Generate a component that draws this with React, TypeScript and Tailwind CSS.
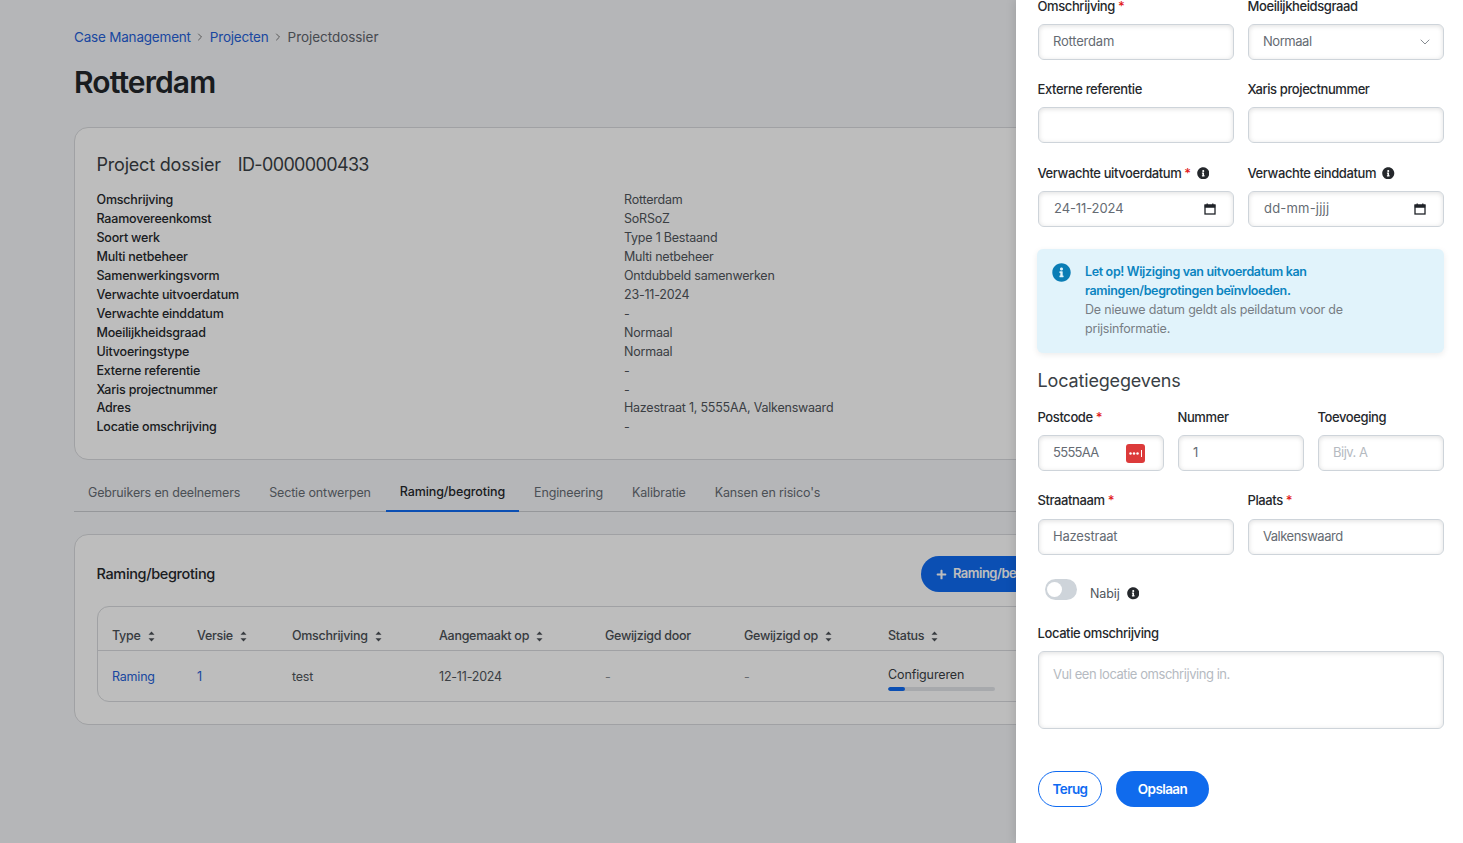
import React from "react";
import { FaInfoCircle, FaPlus } from "react-icons/fa";
import { ChevronDown, ChevronRight } from "lucide-react";

const details: [string, string][] = [
  ["Omschrijving", "Rotterdam"],
  ["Raamovereenkomst", "SoRSoZ"],
  ["Soort werk", "Type 1 Bestaand"],
  ["Multi netbeheer", "Multi netbeheer"],
  ["Samenwerkingsvorm", "Ontdubbeld samenwerken"],
  ["Verwachte uitvoerdatum", "23-11-2024"],
  ["Verwachte einddatum", "-"],
  ["Moeilijkheidsgraad", "Normaal"],
  ["Uitvoeringstype", "Normaal"],
  ["Externe referentie", "-"],
  ["Xaris projectnummer", "-"],
  ["Adres", "Hazestraat 1, 5555AA, Valkenswaard"],
  ["Locatie omschrijving", "-"],
];

const tabs = ["Gebruikers en deelnemers", "Sectie ontwerpen", "Raming/begroting", "Engineering", "Kalibratie", "Kansen en risico's"];

const Sort = () => (
  <svg width="7" height="11" viewBox="0 0 7 11" className="ml-[7px] shrink-0" fill="currentColor">
    <path d="M3.5 0.5 6.5 3.8H0.5Z" />
    <path d="M3.5 10.5 0.5 7.2H6.5Z" />
  </svg>
);

const CalendarGlyph = () => (
  <svg width="12" height="12" viewBox="0 0 12 12" className="shrink-0 text-[#1f2328]" fill="none" stroke="currentColor">
    <rect x="1" y="2" width="10" height="9" strokeWidth="1.3" />
    <rect x="1" y="2" width="10" height="2.4" fill="currentColor" strokeWidth="0.6" />
    <path d="M3.2 0.5v2M8.8 0.5v2" strokeWidth="1.3" />
  </svg>
);

const Field = ({ children, className = "h-9 items-center" }: { children?: React.ReactNode; className?: string }) => (
  <div className={`flex rounded-md border border-[#ced4da] bg-white px-[14px] text-[13px] tracking-[-0.2px] text-[#656b73] shadow-[inset_0_1px_5px_rgba(0,0,0,0.13)] ${className}`}>
    {children}
  </div>
);

const Label = ({ text, req, info }: { text: string; req?: boolean; info?: boolean }) => (
  <div className="-ml-[0.5px] flex h-[18px] items-center pb-[2px] text-[13px] leading-[12px] font-medium tracking-[-0.4px] text-[#25282c]">
    <span>{text}</span>
    {req && <span className="ml-[3px] text-[#e21a1a]">*</span>}
    {info && <FaInfoCircle className="ml-[6px] text-[12.5px] text-[#25282c]" />}
  </div>
);

export default function App() {
  return (
    <div className="relative h-[843px] w-full overflow-hidden bg-[#f5f6f9] font-['Inter','Liberation_Sans',sans-serif]">
      <main className="w-[1315px] pl-[74px] pt-[28px] text-[#3a3f45]">
        <nav className="flex h-[18px] items-center text-[13.5px] tracking-[-0.2px]">
          <span className="text-[#2561d8]">Case Management</span>
          <ChevronRight className="mx-[3.5px] h-3 w-3 text-[#777]" />
          <span className="text-[#2561d8]">Projecten</span>
          <ChevronRight className="mx-[3.5px] h-3 w-3 text-[#777]" />
          <span className="tracking-[-0.05px] text-[#5f656c]">Projectdossier</span>
        </nav>
        <h1 className="mt-[17px] h-[38px] text-[30px] leading-[38px] font-semibold tracking-[-0.9px] text-[#23262a]">Rotterdam</h1>

        <section className="mt-[26px] h-[333px] rounded-[14px] border border-[#d8dadd] bg-white px-[22px] pt-[24px]">
          <h2 className="-ml-[0.5px] flex h-[24px] items-center gap-[17px] text-[18px] tracking-[-0.2px] text-[#3a3f45]">
            <span>Project dossier</span>
            <span className="tracking-[-0.65px]">ID-0000000433</span>
          </h2>
          <dl className="mt-[15px] -ml-[0.5px] grid grid-cols-[527.5px_1fr] text-[12.5px] leading-[18.95px]">
            {details.map(([k, v]) => (
              <React.Fragment key={k}>
                <dt className="font-medium tracking-[-0.2px] text-[#25282c]">{k}</dt>
                <dd className="tracking-[-0.22px] text-[#50555b]">{v}</dd>
              </React.Fragment>
            ))}
          </dl>
        </section>

        <div className="mt-[14px] flex h-[38px] gap-px border-b border-[#c9ccd0] text-[12.5px]">
          {tabs.map((t) => (
            <div
              key={t}
              className={`flex h-[38px] items-center px-[14px] ${
                t === "Raming/begroting" ? "border-b-2 border-[#0f6bf2] font-medium tracking-[-0.1px] text-[#25282c]" : "tracking-[-0.15px] text-[#666c73]"
              }`}
            >
              {t}
            </div>
          ))}
        </div>

        <section className="mt-[22px] h-[191px] rounded-[14px] border border-[#d8dadd] bg-white px-[22px] pt-[21px]">
          <div className="flex h-9 items-center">
            <h3 className="-ml-[0.5px] text-[14.5px] font-medium tracking-[-0.35px] text-[#25282c]">Raming/begroting</h3>
            <button className="ml-[706px] flex h-9 w-[180px] items-center gap-[6px] rounded-full bg-[#0f6bf2] px-[15px] text-[13px] font-semibold tracking-[-0.5px] whitespace-nowrap text-white">
              <FaPlus className="text-[11px]" />
              Raming/begroting
            </button>
          </div>
          <div className="mt-[14px] h-[96px] rounded-[12px] border border-[#d8dadd] text-[12.5px]">
            <div className="grid h-[44px] grid-cols-[85px_95px_147px_166px_139px_144px_1fr] items-center border-b border-[#d8dadd] px-[14px] pt-[16px] font-medium tracking-[-0.28px] text-[#4b5056]">
              {["Type", "Versie", "Omschrijving", "Aangemaakt op", "Gewijzigd door", "Gewijzigd op", "Status"].map((h) => (
                <div key={h} className="flex items-center">
                  {h}
                  {h !== "Gewijzigd door" && <Sort />}
                </div>
              ))}
            </div>
            <div className="grid h-[50px] grid-cols-[85px_95px_147px_166px_139px_144px_1fr] items-center px-[14px] pt-[2px] tracking-[-0.2px] text-[#50555b]">
              <div className="text-[#2561d8]">Raming</div>
              <div className="text-[#2561d8]">1</div>
              <div>test</div>
              <div>12-11-2024</div>
              <div className="text-[#8a8f95]">-</div>
              <div className="text-[#8a8f95]">-</div>
              <div className="pt-[2px] tracking-[-0.12px]">
                <div className="leading-[18px] text-[#3a3f45]">Configureren</div>
                <div className="mt-[3px] h-1 w-[107px] overflow-hidden rounded-full bg-[#e2e5e9]">
                  <div className="h-1 w-[17px] rounded-full bg-[#0f6bf2]" />
                </div>
              </div>
            </div>
          </div>
        </section>
      </main>

      {/* dimmed backdrop */}
      <div className="absolute inset-0 bg-black/[0.26]" />

      {/* side panel */}
      <aside className="absolute top-0 right-0 bottom-0 w-[447px] overflow-hidden bg-white pr-[19px] pl-[22px] shadow-[0_0_10px_rgba(0,0,0,0.15)]">
        <div className="-mt-[2px]">
          <div className="grid grid-cols-2 gap-x-[14px]">
            <div>
              <Label text="Omschrijving" req />
              <div className="mt-[8px]"><Field>Rotterdam</Field></div>
            </div>
            <div>
              <Label text="Moeilijkheidsgraad" />
              <div className="mt-[8px]">
                <Field className="h-9 items-center justify-between !pr-[10px]">
                  <span className="tracking-[-0.45px]">Normaal</span>
                  <ChevronDown className="h-4 w-4 text-[#6f757c]" strokeWidth={1.25} />
                </Field>
              </div>
            </div>
          </div>

          <div className="mt-[21px] grid grid-cols-2 gap-x-[14px]">
            <div>
              <Label text="Externe referentie" />
              <div className="mt-[8px]"><Field /></div>
            </div>
            <div>
              <Label text="Xaris projectnummer" />
              <div className="mt-[8px]"><Field /></div>
            </div>
          </div>

          <div className="mt-[22px] grid grid-cols-2 gap-x-[14px]">
            <div>
              <Label text="Verwachte uitvoerdatum" req info />
              <div className="mt-[8px]">
                <Field className="h-9 items-center justify-between !pr-[17px]">
                  <span className="ml-px tracking-[-0.1px]">24-11-2024</span>
                  <CalendarGlyph />
                </Field>
              </div>
            </div>
            <div>
              <Label text="Verwachte einddatum" info />
              <div className="mt-[8px]">
                <Field className="h-9 items-center justify-between !pr-[17px]">
                  <span className="ml-px tracking-[0.2px]">dd-mm-jjjj</span>
                  <CalendarGlyph />
                </Field>
              </div>
            </div>
          </div>

          <div className="mt-[22px] -ml-px flex h-[104px] gap-[14px] rounded-md bg-[#e1f3fb] pt-[13px] pl-[15px] text-[12.5px] leading-[19px] tracking-[-0.2px] shadow-[0_2px_6px_rgba(0,0,0,0.08)]">
            <FaInfoCircle className="mt-[1px] shrink-0 text-[19px] text-[#0b7db5]" />
            <p className="w-[270px] text-[#777d84]">
              <span className="font-semibold tracking-[-0.35px] text-[#0b84c0]">Let op! Wijziging van uitvoerdatum kan ramingen/begrotingen beïnvloeden.</span>
              <br />
              De nieuwe datum geldt als peildatum voor de prijsinformatie.
            </p>
          </div>

          <h2 className="mt-[16px] -ml-[0.5px] h-[24px] text-[18px] leading-[24px] tracking-[-0.15px] text-[#3a3f45]">Locatiegegevens</h2>

          <div className="mt-[16px] grid grid-cols-3 gap-x-[14px]">
            <div>
              <Label text="Postcode" req />
              <div className="mt-[8px]">
                <Field className="h-9 items-center justify-between !pr-[18px]">
                  <span className="tracking-[-0.7px]">5555AA</span>
                  <svg width="19" height="19" viewBox="0 0 19 19" className="shrink-0">
                    <rect width="19" height="19" rx="3" fill="#dc3a3a" />
                    <circle cx="4.5" cy="9.5" r="1.25" fill="#fff" />
                    <circle cx="8" cy="9.5" r="1.25" fill="#fff" />
                    <circle cx="11.5" cy="9.5" r="1.25" fill="#fff" />
                    <rect x="15" y="6" width="1" height="7" fill="#fff" />
                  </svg>
                </Field>
              </div>
            </div>
            <div>
              <Label text="Nummer" />
              <div className="mt-[8px]"><Field>1</Field></div>
            </div>
            <div>
              <Label text="Toevoeging" />
              <div className="mt-[8px]"><Field><span className="tracking-[-0.5px] text-[#b5bac1]">Bijv. A</span></Field></div>
            </div>
          </div>

          <div className="mt-[21px] grid grid-cols-2 gap-x-[14px]">
            <div>
              <Label text="Straatnaam" req />
              <div className="mt-[9px]"><Field>Hazestraat</Field></div>
            </div>
            <div>
              <Label text="Plaats" req />
              <div className="mt-[9px]"><Field><span className="tracking-[-0.5px]">Valkenswaard</span></Field></div>
            </div>
          </div>

          <div className="mt-[24px] flex h-[21px] items-start pl-[7px]">
            <div className="flex h-[21px] w-8 items-center rounded-full bg-[#ced4da] pl-[2px]">
              <div className="h-[15px] w-[15px] rounded-full bg-white" />
            </div>
            <span className="mt-[7px] ml-[13px] text-[12.5px] leading-[16px] tracking-[-0.1px] text-[#50555b]">Nabij</span>
            <FaInfoCircle className="mt-[8px] ml-[7px] text-[12.5px] text-[#25282c]" />
          </div>

          <div className="mt-[25px]">
            <Label text="Locatie omschrijving" />
            <div className="mt-[8px]">
              <Field className="h-[78px] items-start pt-[13px]">
                <span className="leading-[18px] tracking-[-0.45px] text-[#b5bac1]">Vul een locatie omschrijving in.</span>
              </Field>
            </div>
          </div>

          <div className="mt-[42px] flex gap-[14px]">
            <button className="h-9 w-16 rounded-full border border-[#0f6bf2] bg-white text-[13.5px] font-semibold tracking-[-0.6px] text-[#0f6bf2]">Terug</button>
            <button className="h-9 w-[93px] rounded-full bg-[#106bed] text-[13.5px] font-semibold tracking-[-0.6px] text-white">Opslaan</button>
          </div>
        </div>
      </aside>
    </div>
  );
}
